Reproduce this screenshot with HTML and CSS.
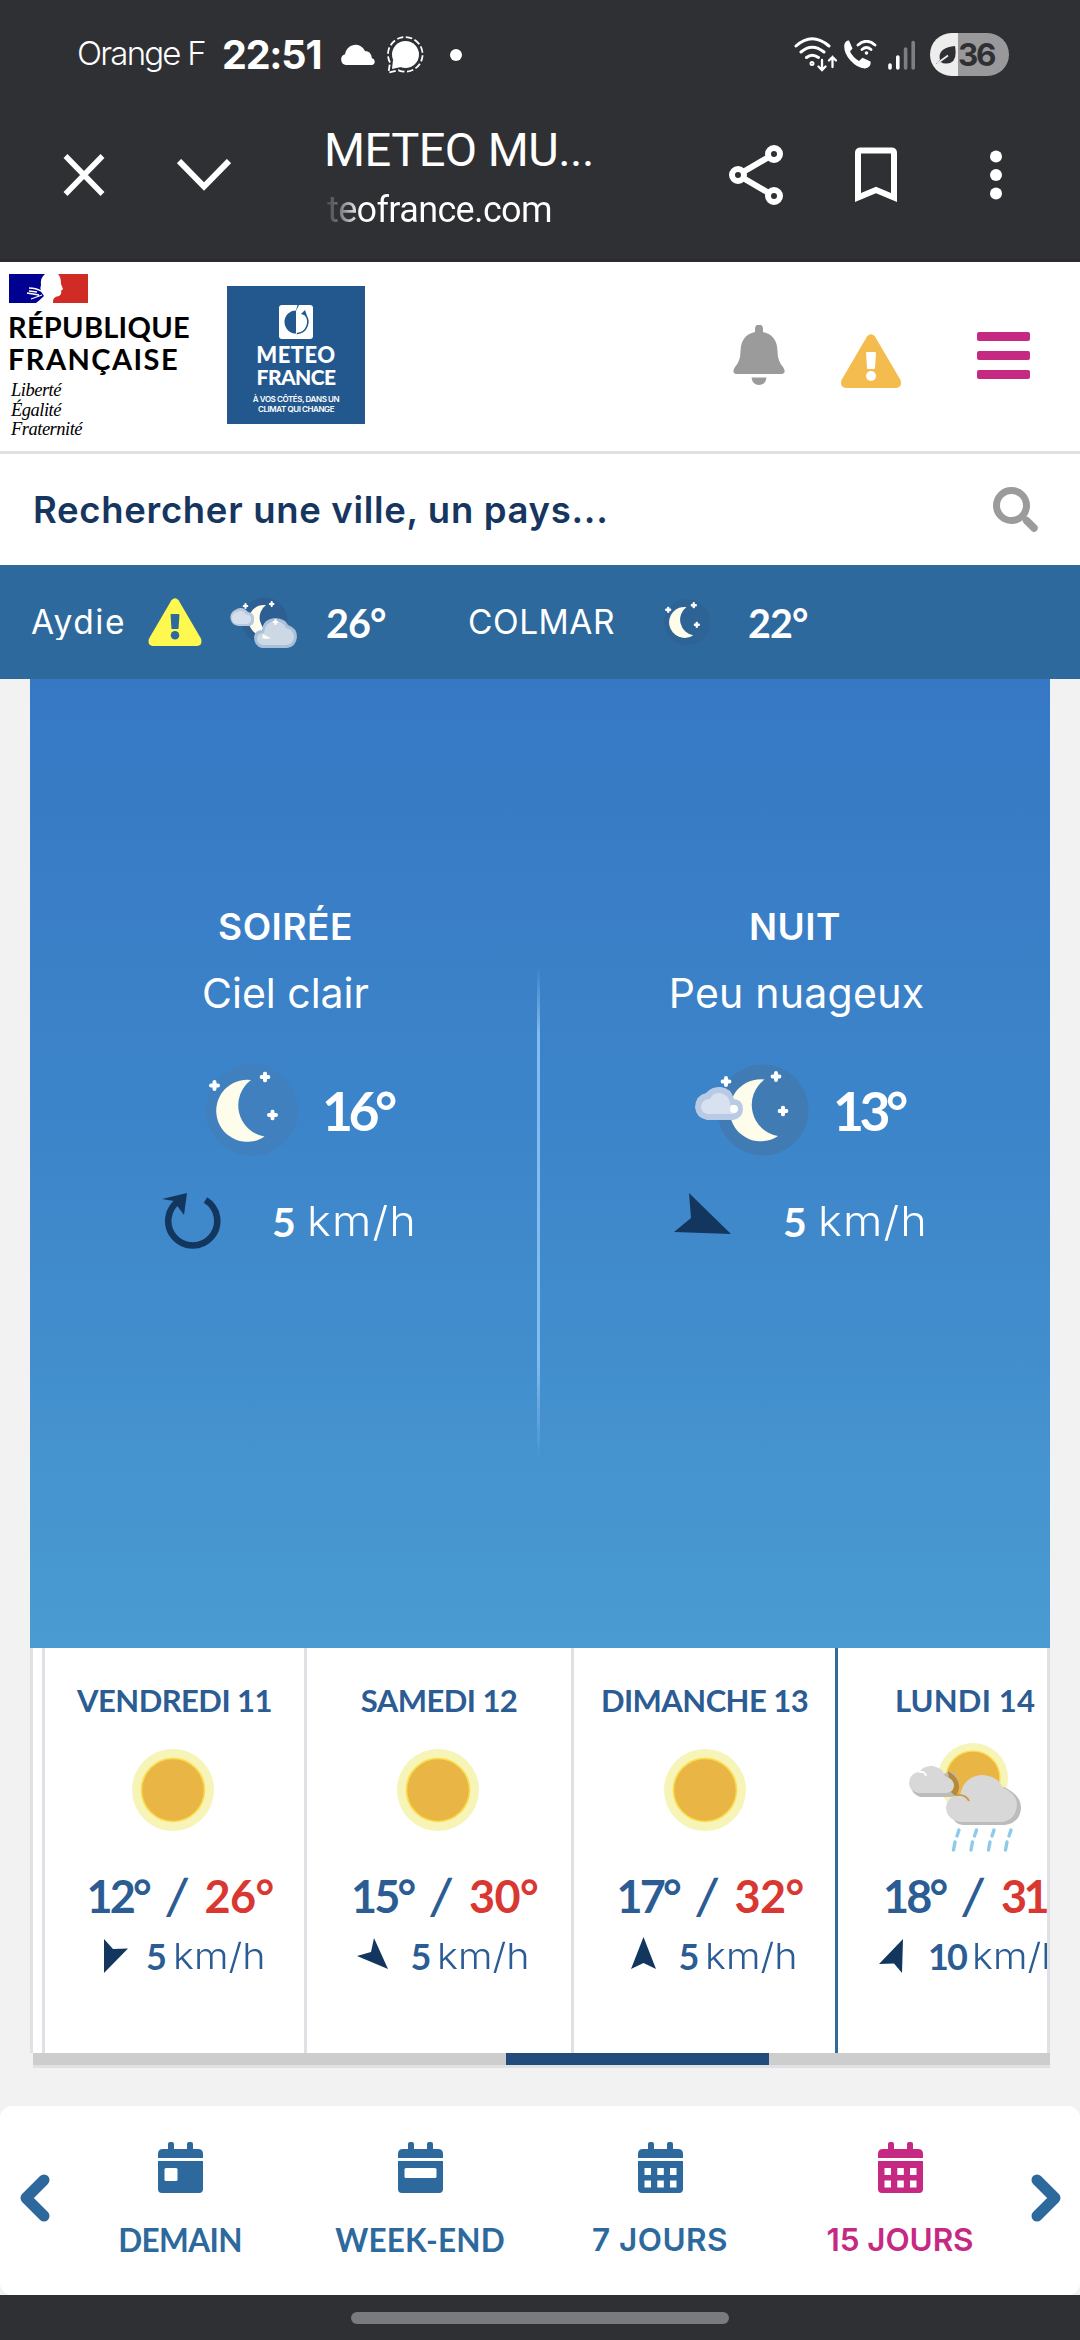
FILE: index.html
```html
<!DOCTYPE html>
<html lang="fr">
<head>
<meta charset="utf-8">
<title>METEO MULHOUSE</title>
<link rel="stylesheet" href="styles.css">
</head>
<body>
<svg class="defs" width="0" height="0">
  <symbol id="moon" viewBox="0 0 92 92">
    <path fill="#fefcea" d="M45 16A31 31 0 1 0 58.5 72.5A31.6 31.6 0 0 1 45 16Z"/>
  </symbol>
  <symbol id="star" viewBox="-5 -5 10 10">
    <path d="M0-3.2V3.2M-3.2 0H3.2" stroke="#fff" stroke-width="3.6" stroke-linecap="round"/>
  </symbol>
  <symbol id="sun" viewBox="0 0 82 82">
    <circle cx="41" cy="41" r="41" fill="#f6f4b6"/>
    <circle cx="41" cy="41" r="31.5" fill="#e9b544" stroke="#fcdc4a" stroke-width="1.6"/>
  </symbol>
  <symbol id="alert" viewBox="0 0 60 54">
    <path fill="currentColor" d="M26 2.500Q30-2 34 2.500L59.500 46Q61.500 53 55 54H5Q-1.500 53 .5 46Z"/>
  </symbol>
  <symbol id="cal" viewBox="0 0 45 52">
    <path fill="currentColor" d="M10 7V2Q10 0 12 0H14Q16 0 16 2V7H29V2Q29 0 31 0H33Q35 0 35 2V7H40Q45 7 45 12V16H0V12Q0 7 5 7ZM0 19H45V47Q45 51 41 51H4Q0 51 0 47Z"/>
  </symbol>
</svg>

<header class="system">
  <div class="status">
    <span class="carrier">Orange F</span>
    <span class="clock">22:51</span>
    <svg width="36" height="21" viewBox="0 0 36 21"><path fill="#fff" d="M6 21A5.500 5.500 0 0 1 5 10.300A10.500 10.500 0 0 1 25 7Q31 7 32 14.300A3.500 3.500 0 0 1 32.500 21Z"/></svg>
    <svg width="37" height="38" viewBox="0 0 37 38"><circle cx="18.500" cy="18.500" r="13.500" fill="#fff"/><path d="M6 24L5 33L14 31Z" fill="#fff"/><path d="M3 26.500A17.300 17.300 0 1 1 11.500 34.300L1.500 36.500Z" fill="none" stroke="#fff" stroke-width="1.800" stroke-dasharray="6.500 2.500"/></svg>
    <span class="dot"></span>
    <svg width="43" height="35" viewBox="0 0 43 35" fill="none" stroke="#fff" stroke-width="3" stroke-linecap="round"><path d="M2 9Q18 -5.500 35 9M7 15Q18 5.500 30 15M12.500 20.500Q18 16 24.500 20.500"/><circle cx="18" cy="26.500" r="1" /><path stroke-width="2.300" d="M28 23V33M24.500 29.500L28 33L31.500 29.500M38.500 30V20M35 23.500L38.500 20L42 23.500"/></svg>
    <svg width="33" height="29" viewBox="0 0 33 29"><path fill="#fff" d="M5 .5L8.500 8.500L6 11.500Q9 17.500 15 21L18.500 17.800L26.500 21.500Q27.500 27 21 28.500Q13 28 6 20Q-1 12 .5 4Q2 0 5 .5Z"/><g fill="none" stroke="#fff" stroke-width="2.800" stroke-linecap="round"><path d="M14 5Q22.500 -2.500 31 5M18 9.500Q22.500 5.500 27 9.500"/></g><circle cx="22.500" cy="13" r="1.800" fill="#fff"/></svg>
    <svg width="28" height="30" viewBox="0 0 28 30" stroke-width="3.600" stroke-linecap="round"><path stroke="#fff" d="M2 25V28M9.800 17V28"/><path stroke="#7e7f81" d="M17.600 9V28M25.200 2.500V28"/></svg>
    <span class="battery"><svg width="22" height="20" viewBox="0 0 22 20"><path fill="#2f3034" d="M1 19Q3 16 5 15Q2 3 20 1Q23 18 12 18.500Q8 19 6 17Q4 18 1 19Z"/><path d="M2 18.500L13 10.500" stroke="#ededee" stroke-width="1.800"/></svg><b>36</b></span>
  </div>
  <div class="toolbar">
    <svg width="42" height="42" viewBox="0 0 42 42"><path d="M2.500 2L39.500 40M39.500 2L2.500 40" stroke="#fff" stroke-width="5.500"/></svg>
    <svg width="54" height="32" viewBox="0 0 54 32"><path d="M2 2L27 27.500L52 2" fill="none" stroke="#fff" stroke-width="6"/></svg>
    <div class="page">
      <div class="page-title">METEO MU...</div>
      <div class="page-url">teofrance.com</div>
    </div>
    <svg width="54" height="60" viewBox="0 0 54 60" fill="none" stroke="#fff" stroke-width="6"><path d="M45 9L9 30L45 51"/><g fill="#2f3034"><circle cx="45" cy="9" r="6"/><circle cx="9" cy="30" r="6"/><circle cx="45" cy="51" r="6"/></g></svg>
    <svg width="42" height="56" viewBox="0 0 42 56"><path d="M3 6Q3 3.500 5.500 3.500H36.500Q39 3.500 39 6V50.500L21 43L3 50.500Z" fill="none" stroke="#fff" stroke-width="6"/></svg>
    <svg width="12" height="50" viewBox="0 0 12 50" fill="#fff"><circle cx="6" cy="6.500" r="6"/><circle cx="6" cy="25" r="6"/><circle cx="6" cy="43.500" r="6"/></svg>
  </div>
</header>

<div class="site-header">
  <div class="republic">
    <svg width="79" height="29" viewBox="0 0 79 29"><path fill="#000091" d="M0 0H36Q31 4 32 11Q30 16 35 22Q31 26 27 29H0Z"/><path d="M20 14Q27 14 32 17L36 20M18 19L30 21M22 25L33 21M20 17L28 18" stroke="#fff" stroke-width="1.300" fill="none"/><path fill="#d12b26" d="M49 0H79V29H44Q43 23 50 22Q53 20 52 17L54 15L52 10Q52 3 49 0Z"/></svg>
    <strong>RÉPUBLIQUE</strong>
    <strong class="wide">FRANÇAISE</strong>
    <em>Liberté</em><em>Égalité</em><em>Fraternité</em>
  </div>
  <div class="meteo">
    <svg width="34" height="34" viewBox="0 0 34 34"><rect width="34" height="34" rx="3" fill="#fff"/><path fill="#23588f" d="M17 5.500A11.500 11.500 0 0 0 17 28.500L19.500 33L17 28V6L20 0H18.500Z"/><path d="M18 28.500A11.500 11.500 0 0 0 26 9.500" fill="none" stroke="#23588f" stroke-width="1.600"/><path fill="#23588f" d="M22 9L28 11L26 5Z"/></svg>
    <b>METEO</b><b class="tight">FRANCE</b>
    <small>À VOS CÔTÉS, DANS UN</small><small>CLIMAT QUI CHANGE</small>
  </div>
  <svg class="bell" width="54" height="60" viewBox="0 0 54 60" fill="#9b9b9b"><path d="M23 7V4Q23-.5 27-.5T31 4V7Q45 10 45.500 26Q45.500 36 51 42Q55 48 49.500 49H4.500Q-1 48 3 42Q8.500 36 8.500 26Q9 10 23 7Z"/><path d="M19.500 52.500H34.500Q33.500 60 27 60T19.500 52.500Z"/></svg>
  <svg class="warn" width="60" height="54" viewBox="0 0 60 54"><use href="#alert"/><path fill="#fff" d="M25 18.500Q25 18 26 18H34Q35 18 35 19L34 34Q34 35 33 35H27Q26 35 26 34Z"/><circle cx="30" cy="42" r="5" fill="#fff"/></svg>
  <div class="burger"><i></i><i></i><i></i></div>
</div>

<div class="search">
  <span>Rechercher une ville, un pays...</span>
  <svg width="46" height="46" viewBox="0 0 46 46"><circle cx="18.500" cy="18.500" r="15" fill="none" stroke="#9b9b9b" stroke-width="7"/><path d="M33.500 33.500L41 41" stroke="#9b9b9b" stroke-width="7.500" stroke-linecap="round"/></svg>
</div>

<div class="favorites">
  <span class="city aydie">Aydie</span>
  <svg class="yellow" width="54" height="48" viewBox="0 0 60 54"><use href="#alert"/><path fill="#2d699d" d="M25 18.500Q25 18 26 18H34Q35 18 35 19L34 34Q34 35 33 35H27Q26 35 26 34Z"/><circle cx="30" cy="42" r="4.800" fill="#2d699d"/></svg>
  <svg width="67" height="51" viewBox="0 0 67 51">
    <circle cx="34.500" cy="23.500" r="23" fill="#2e5f92"/>
    <use href="#moon" x="13.500" y="0" width="46" height="46"/>
    <use href="#star" x="12.500" y="6" width="6" height="6"/><use href="#star" x="38.700" y="4" width="6" height="6"/>
    <path fill="#b9c8dc" d="M8.500 29A8.500 8.500 0 0 1 5 13Q12 8 18 15Q25 16 24 23Q24 29 18 29Z"/>
    <path fill="#d3dfec" d="M8.500 27A6 6 0 0 1 7 15Q13 12 16 17.500Q22 18 21 23Q20 27 16 27Z"/>
    <path fill="#a9c0da" d="M32 51Q24 49 24 40Q25 33 32 33Q33 22 45 21Q56 22 58 28Q67 31 67 40Q66 50 57 51Z"/>
    <path fill="#ccd8e6" d="M33 48Q27 47 27 41Q28 36 34 36Q35 25 45 24Q54 25 56 31Q64 33 64 40Q63 47 57 48Z"/>
    <path fill="#fefcea" d="M33 37Q40 41 41 41Q36 43 32 41Z"/>
    <use href="#star" x="42.500" y="22" width="6" height="6"/>
  </svg>
  <b>26°</b>
  <span class="city">COLMAR</span>
  <svg width="46" height="46" viewBox="0 0 92 92"><circle cx="46" cy="46" r="46" fill="#2e6395"/><use href="#moon" width="92" height="92"/><use href="#star" x="2" y="15" width="13" height="13"/><use href="#star" x="53" y="6" width="13" height="13"/><use href="#star" x="59" y="45" width="13" height="13"/></svg>
  <b>22°</b>
</div>

<main>
  <section class="sky">
    <div class="period evening">
      <h2>SOIRÉE</h2>
      <p>Ciel clair</p>
      <div class="now">
        <svg width="92" height="92" viewBox="0 0 92 92"><circle cx="46" cy="46" r="46" fill="#4180be"/><use href="#moon" width="92" height="92"/><use href="#star" x="3" y="16" width="11" height="11"/><use href="#star" x="53.500" y="7.500" width="11" height="11"/><use href="#star" x="61" y="45.500" width="11" height="11"/></svg>
        <b>16°</b>
      </div>
      <div class="wind">
        <svg width="59" height="56" viewBox="0 0 59 56"><path d="M43.500 7A24.500 24.500 0 1 1 18 7" fill="none" stroke="#13365f" stroke-width="6.500"/><path fill="#13365f" d="M0 6L25 0L22 22L16 14L12 8Z"/></svg>
        <b>5</b><span>km/h</span>
      </div>
    </div>
    <div class="divider"></div>
    <div class="period night">
      <h2>NUIT</h2>
      <p>Peu nuageux</p>
      <div class="now">
        <svg width="115" height="92" viewBox="0 0 115 92"><circle cx="68" cy="46" r="45.500" fill="#417bb3"/><use href="#moon" x="24.500" y="-.5" width="92" height="92"/><use href="#star" x="25.500" y="12" width="11" height="11"/><use href="#star" x="75.500" y="7" width="11" height="11"/><use href="#star" x="82.500" y="41.500" width="11" height="11"/><path fill="#b9cbe4" d="M12 56Q1 54 0 43Q1 31 11 29Q17 22 26 23Q36 24 39 35Q48 36 48 45Q48 54 38 56Z"/><path fill="#d7e1f0" d="M12 50Q6 48 6 43Q7 35 15 35Q18 28 25 29Q35 31 35 41Q42 40 42 45Q41 50 37 50Z"/><circle cx="39" cy="45" r="4" fill="#fefefa"/></svg>
        <b>13°</b>
      </div>
      <div class="wind">
        <svg width="58" height="56" viewBox="0 0 58 56"><path fill="#13365f" d="M15 0L57 41L0 39L17 25Z"/></svg>
        <b>5</b><span>km/h</span>
      </div>
    </div>
  </section>

  <section class="days">
    <article class="day">
      <h3>VENDREDI 11</h3>
      <svg width="121" height="138" viewBox="0 0 121 138"><use href="#sun" x="18" y="28" width="82" height="82"/></svg>
      <div class="temps"><b class="low">12°</b><i>/</i><b class="high">26°</b></div>
      <div class="breeze"><svg width="36" height="36" viewBox="0 0 36 36"><path d="M9 1L18 11L33 10.500L9 35Z"/></svg><b>5</b><span>km/h</span></div>
    </article>
    <article class="day saturday">
      <h3>SAMEDI 12</h3>
      <svg width="121" height="138" viewBox="0 0 121 138"><use href="#sun" x="18" y="28" width="82" height="82"/></svg>
      <div class="temps"><b class="low">15°</b><i>/</i><b class="high">30°</b></div>
      <div class="breeze"><svg width="36" height="36" viewBox="0 0 36 36"><path d="M15 0L29 31L-2 18L12 14Z"/></svg><b>5</b><span>km/h</span></div>
    </article>
    <article class="day sunday">
      <h3>DIMANCHE 13</h3>
      <svg width="118" height="138" viewBox="0 0 118 138"><use href="#sun" x="18" y="28" width="82" height="82"/></svg>
      <div class="temps"><b class="low">17°</b><i>/</i><b class="high">32°</b></div>
      <div class="breeze"><svg width="36" height="36" viewBox="0 0 36 36"><path d="M16.500-1L29 31L16.500 25L4 31Z"/></svg><b>5</b><span>km/h</span></div>
    </article>
    <article class="day monday">
      <h3>LUNDI 14</h3>
      <svg width="118" height="138" viewBox="0 0 118 138">
        <use href="#sun" x="32" y="22" width="70" height="70"/>
        <path fill="#bcbcbc" d="M14 76Q6 73 5 66L45 50Q54 56 53 67Q52 75 46 76Z"/>
        <path fill="#b58b35" d="M42 50Q54 57 53 67Q52 73 49 75L44 70Z"/>
        <path fill="#d8d8d8" d="M13 72Q3 70 3 62Q4 52 13 51Q18 44 27 45Q37 47 39 55Q48 58 48 65Q47 72 40 72Z"/>
        <path d="M13 51Q19 50 20 55" fill="none" stroke="#fff" stroke-width="1.800"/>
        <path fill="#bcbcbc" d="M57 104Q49 103 46 96L98 66Q115 74 115 87Q114 102 99 104Z"/>
        <path fill="#d8d8d8" d="M55 101Q41 99 40 87Q41 75 54 74Q58 55 76 54Q92 55 97 67Q111 73 111 84Q110 98 97 101Z"/>
        <path d="M50 74Q60 73 63 80" fill="none" stroke="#c79a3d" stroke-width="1.800"/>
        <g stroke="#8fcbe8" stroke-width="3.400" stroke-linecap="round"><path d="M53 109L51 115M49 121L47.500 129M70.500 109L68.500 115M66.500 121L65 129M88 109L86 115M84 121L82.500 129M105 109L103 115M101 121L99.500 129"/></g>
      </svg>
      <div class="temps"><b class="low">18°</b><i>/</i><b class="high">31°</b></div>
      <div class="breeze"><svg width="36" height="36" viewBox="0 0 36 36"><path d="M26 1L25 35L17 25.500L2 26Z"/></svg><b class="ten">10</b><span>km/h</span></div>
    </article>
  </section>
  <div class="track"><div class="thumb"></div></div>
</main>

<nav>
  <svg class="prev" width="30" height="48" viewBox="0 0 30 48"><path d="M24 6L6 24L24 42" fill="none" stroke="currentColor" stroke-width="11" stroke-linecap="round" stroke-linejoin="round"/></svg>
  <div class="tab"><svg width="45" height="52" viewBox="0 0 45 52"><use href="#cal"/><rect x="6.500" y="26" width="13" height="13" rx="1.500" fill="#fff"/></svg><span class="t1">DEMAIN</span></div>
  <div class="tab"><svg width="45" height="52" viewBox="0 0 45 52"><use href="#cal"/><rect x="6.500" y="26" width="32" height="10" rx="1.500" fill="#fff"/></svg><span class="t2">WEEK-END</span></div>
  <div class="tab"><svg width="45" height="52" viewBox="0 0 45 52"><use href="#cal"/><path fill="#fff" d="M6.500 26h6.500v7h-6.500zM19.300 26h6.500v7h-6.500zM32 26h6.500v7h-6.500zM6.500 38.500h6.500v7h-6.500zM19.300 38.500h6.500v7h-6.500zM32 38.500h6.500v7h-6.500z"/></svg><span class="t3">7 JOURS</span></div>
  <div class="tab active"><svg width="45" height="52" viewBox="0 0 45 52"><use href="#cal"/><path fill="#fff" d="M6.500 26h6.500v7h-6.500zM19.300 26h6.500v7h-6.500zM32 26h6.500v7h-6.500zM6.500 38.500h6.500v7h-6.500zM19.300 38.500h6.500v7h-6.500zM32 38.500h6.500v7h-6.500z"/></svg><span class="t4">15 JOURS</span></div>
  <svg class="next" width="30" height="48" viewBox="0 0 30 48"><path d="M6 6L24 24L6 42" fill="none" stroke="currentColor" stroke-width="11" stroke-linecap="round" stroke-linejoin="round"/></svg>
</nav>
<footer><div class="home"></div></footer>
</body>
</html>
```
FILE: styles.css
```css
* { box-sizing: border-box; margin: 0; padding: 0; }
body { width: 1080px; height: 2340px; overflow: hidden; background: #f2f2f2; font-family: Lato, "Noto Sans", sans-serif; white-space: nowrap; display: flex; flex-direction: column; }
svg { display: block; flex: none; }
.defs { position: absolute; }
i { font-style: normal; }

.system { height: 262px; background: #2f3034; border-bottom: 3px solid #2a2b2e; color: #fff; }
.status { height: 109px; padding-left: 77px; display: grid; grid-template-columns: 145px 118px 47px 63px 344px 50px 44px 42px 79px; align-items: center; font-family: Inter, sans-serif; }
.carrier { font-size: 33px; font-weight: 300; letter-spacing: -1.8px; margin-top: -3px; }
.clock { font-size: 39.5px; font-weight: 700; letter-spacing: -1.2px; }
.dot { width: 12px; height: 12px; border-radius: 50%; background: #fff; }
.battery { width: 79px; height: 43px; border-radius: 22px; background: linear-gradient(90deg, #ededee 28px, #99999c 28px); display: flex; align-items: center; padding-left: 5px; color: #2f3034; }
.battery b { font-size: 31.5px; letter-spacing: -2.3px; margin-left: 1px; }
.toolbar { height: 132px; padding-left: 63px; display: grid; grid-template-columns: 114px 147px 405px 126px 135px 12px; align-items: center; font-family: Roboto, sans-serif; }
.page { align-self: start; margin-top: 11px; }
.page-title { font-size: 47px; line-height: 60px; letter-spacing: -.53px; }
.page-url { font-size: 36px; line-height: 60px; letter-spacing: -.64px; margin-left: 3px; width: 230px; background: linear-gradient(90deg, #4c4d50 0, #747578 12px, #fff 34px); -webkit-background-clip: text; background-clip: text; color: transparent; }

.site-header { height: 192px; background: #fff; border-bottom: 3px solid #dfe1e5; display: grid; grid-template-columns: 218px 505px 109px 136px 53px; padding-left: 9px; align-items: start; }
.republic { display: flex; flex-direction: column; padding-top: 12px; color: #000; }
.republic svg { margin-bottom: 8px; }
.republic strong { font-size: 29px; line-height: 32px; letter-spacing: .27px; margin-left: -1px; }
.republic .wide { letter-spacing: 1.45px; margin-bottom: 6px; }
.republic em { font: italic 18.5px/19.5px "Liberation Serif", serif; letter-spacing: -.5px; margin-left: 2px; }
.meteo { width: 138px; height: 138px; margin-top: 24px; background: #23588f; color: #fff; display: flex; flex-direction: column; align-items: center; padding-top: 19px; }
.meteo svg { margin-bottom: 5px; }
.meteo b { font-size: 22px; line-height: 22px; font-weight: 900; letter-spacing: .46px; }
.meteo .tight { font-size: 21px; letter-spacing: -.6px; margin-bottom: 6px; }
.meteo small { font: 600 8px/10px Inter, sans-serif; letter-spacing: -.42px; }
.bell { margin-top: 63px; }
.warn { margin-top: 72px; color: #f4bb4e; }
.burger { width: 53px; margin-top: 70px; display: flex; flex-direction: column; gap: 10px; }
.burger i { height: 9px; border-radius: 2px; background: #c62982; }

.search { height: 111px; background: #fff; padding: 0 41px 0 33px; display: flex; align-items: center; justify-content: space-between; }
.search span { font: 600 36.5px Inter, sans-serif; letter-spacing: .68px; color: #16365f; }

.favorites { height: 114px; background: #2d699d; color: #fff; padding-left: 31px; display: grid; grid-template-columns: 117px 82px 96px 142px 196px 84px 70px; align-items: center; }
.city { font-family: Inter, sans-serif; font-size: 33.5px; letter-spacing: .52px; }
.aydie { letter-spacing: 1.59px; height: 36px; line-height: 36px; overflow: hidden; }
.favorites b { font-size: 39.500px; letter-spacing: -.9px; }
.yellow { color: #fef84f; }

main { margin: 0 30px; height: 1389px; }
.sky { height: 969px; display: grid; grid-template-columns: 507px 3px 510px; color: #fff; background: linear-gradient(#3678c4, #3d86ca 50%, #4a9bd2); }
.period { padding-top: 218px; }
.period h2 { font: 600 37px/60px Inter, sans-serif; letter-spacing: .54px; text-align: center; }
.period p { font: 400 41px/72px Inter, sans-serif; text-align: center; }
.evening p { padding-left: 4px; }
.evening h2 { padding-left: 4px; }
.night p { letter-spacing: .26px; padding-left: 3px; }
.now { height: 161px; display: flex; align-items: center; padding-left: 176px; }
.now b { font-size: 53.5px; letter-spacing: -4.500px; margin-left: 24px; }
.night .now { padding-left: 155px; }
.night .now b { margin-left: 23px; }
.wind { height: 62px; display: flex; align-items: center; padding-left: 132px; font-size: 41px; }
.wind svg { margin-right: 51px; }
.night .wind { padding-left: 134px; }
.wind span { font-family: Inter, sans-serif; font-weight: 300; letter-spacing: 1px; margin-left: 11px; transform: scaleX(1.1); transform-origin: left; }
.divider { margin-top: 288px; height: 493px; background: linear-gradient(transparent, #83bcf0 14%, #83bcf0 80%, transparent); }

.days { height: 405px; background: #fff; border: solid #dfe1e5; border-width: 0 3px; padding-left: 9px; overflow: hidden; display: flex; color: #2b5c93; }
.day { flex: none; width: 262px; border-left: 3px solid #dfe1e5; padding-top: 31px; display: flex; flex-direction: column; align-items: center; }
.saturday { width: 267px; }
.sunday { width: 264px; }
.monday { width: 257px; border-color: #34699a; }
.day h3 { font-size: 31px; line-height: 42px; letter-spacing: -.55px; }
.temps { height: 73px; display: flex; align-items: center; gap: 15px; padding-left: 10px; font-size: 45px; }
.temps b { letter-spacing: -2.900px; width: 63px; }
.temps .high { color: #d93832; letter-spacing: -.6px; width: 68px; }
.temps i { width: 25px; font: 500 45px Inter, sans-serif; text-align: center; transform: skewX(-11deg); }
.monday .temps { padding-left: 22px; }
.monday .high { letter-spacing: -3.6px; }
.monday h3 { letter-spacing: .19px; }
.breeze { height: 48px; display: flex; align-items: center; font-size: 36px; padding-left: 3px; }
.breeze svg { margin-right: 15px; fill: #13365f; overflow: visible; }
.breeze span { font-family: Inter, sans-serif; font-weight: 300; transform: scaleX(1.1); transform-origin: left; margin-left: 6px; }
.sunday .breeze { padding-left: 8px; }
.ten { letter-spacing: -2px; }
.track { margin-left: 3px; height: 15px; background: #cdcdcd; border-bottom: 3px solid #dfe1e5; padding-left: 473px; }
.thumb { width: 263px; height: 12px; background: #234b7c; }

nav { margin-top: 38px; height: 189px; background: #fff; border-radius: 12px; color: #2d699d; display: grid; grid-template-columns: 60px repeat(4, 240px) 60px; }
.prev { margin: 68px 0 0 20px; }
.next { margin: 68px 0 0 11px; }
.tab { padding-top: 36px; display: flex; flex-direction: column; align-items: center; gap: 26px; font-size: 31.5px; line-height: 40px; font-weight: 700; }
.t1 { letter-spacing: -.6px; }
.t2 { letter-spacing: .18px; }
.t3, .t4 { font: 600 31.5px/40px Inter, sans-serif; letter-spacing: .45px; }
.t4 { letter-spacing: -.1px; }
.active { color: #c62982; }
footer { height: 45px; background: #2f3034; padding-top: 17px; }
.home { width: 378px; height: 12px; border-radius: 6px; background: #7b7b7d; margin: 0 auto; }
```
